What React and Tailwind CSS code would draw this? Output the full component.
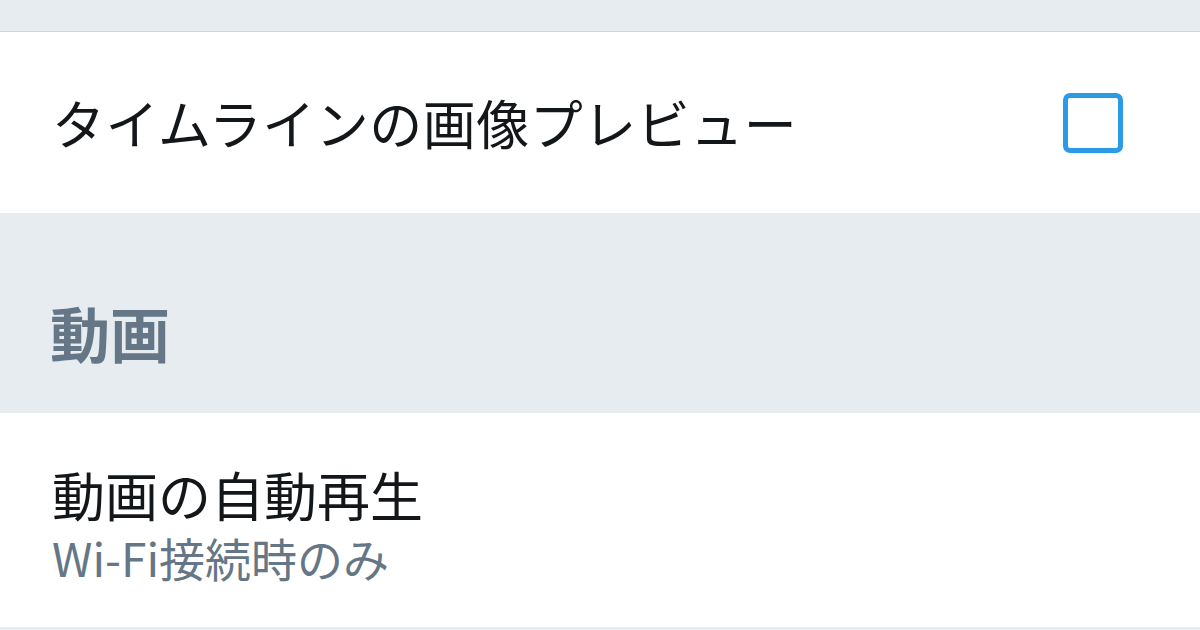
export default function App() {
  const font = { fontFamily: '"Noto Sans CJK JP", "Noto Sans", sans-serif' };
  return (
    <div className="w-[1200px] h-[630px] overflow-hidden bg-white flex flex-col" style={font}>
      <div className="h-[32px] bg-[#e6ecf0] border-b border-[#ccd6dd] shrink-0" />
      <div className="h-[181px] shrink-0 flex items-center justify-between pl-[52px] pr-[77px]">
        <span className="text-[53px] leading-none text-[#14171a] tracking-[0.5px]">タイムラインの画像プレビュー</span>
        <div className="w-[60px] h-[60px] rounded-[7px] border-[5px] border-[#2b9be8] bg-white" />
      </div>
      <div className="h-[200px] shrink-0 bg-[#e6ecf0] flex items-start pl-[50px] pt-[89px]">
        <span className="text-[60px] leading-none font-bold text-[#657786]">動画</span>
      </div>
      <div className="flex-1 flex flex-col pl-[52px] pt-[52px] border-b-[3px] border-[#e6ecf0]">
        <span className="text-[53px] leading-[1.1] text-[#14171a]">動画の自動再生</span>
        <span className="text-[46px] leading-[1.1] text-[#657786] mt-[9px]">Wi-Fi接続時のみ</span>
      </div>
    </div>
  );
}
